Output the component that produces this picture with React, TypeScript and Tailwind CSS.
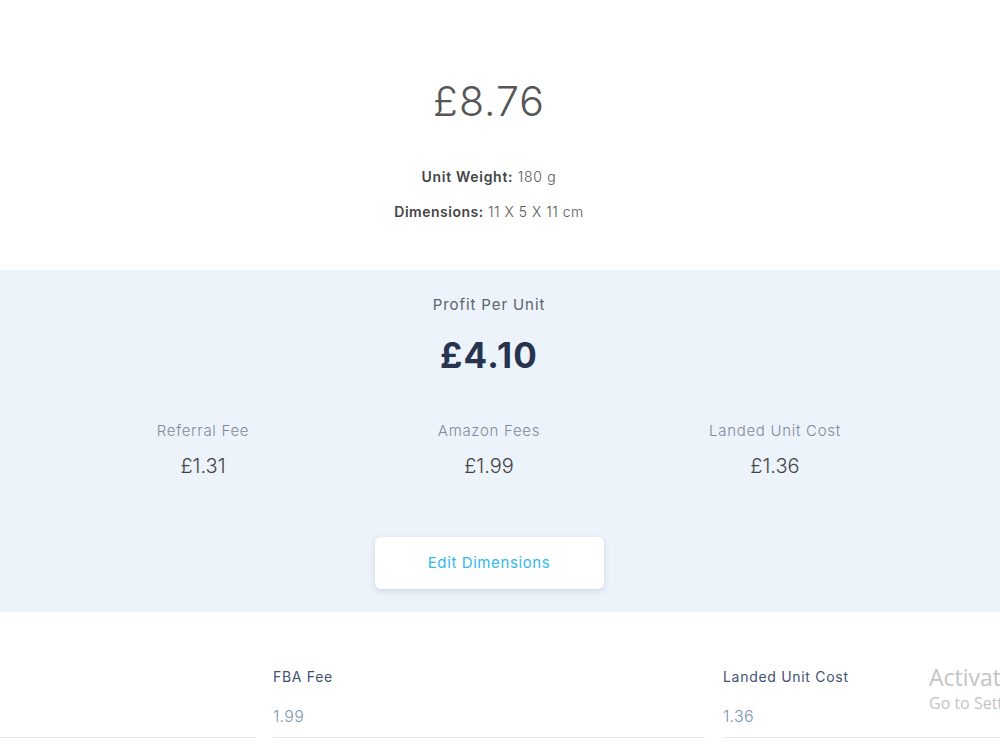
import React from 'react';

const fees = [
  { label: 'Referral Fee', value: '£1.31' },
  { label: 'Amazon Fees', value: '£1.99' },
  { label: 'Landed Unit Cost', value: '£1.36' },
];

function Field({ label, value, className }: { label?: string; value?: string; className: string }) {
  return (
    <div className={className}>
      <div className="pt-[55px] h-[75px] text-[14px] leading-[20px] font-normal tracking-[0.7px] text-[#3f5270]">{label}</div>
      <div className="mt-[17px] h-[24px] text-[16px] leading-[24px] font-light tracking-[0.3px] text-[#7b93b5]">{value}</div>
      <div className="mt-[9px] border-b border-[#e3e6ea]" />
    </div>
  );
}

export default function App() {
  return (
    <div className="relative w-[1000px] h-[750px] overflow-hidden bg-white font-['Inter','Noto_Sans',sans-serif]">
      <section className="h-[270px] w-[978px] flex flex-col items-center">
        <h1 className="pt-[80px] text-[41px] leading-[42px] font-light text-[#555] tracking-[1px]">£8.76</h1>
        <p className="mt-[45px] text-[14px] leading-[20px] tracking-[0.7px] text-[#555]">
          <span className="font-semibold text-[#444]">Unit Weight:</span> <span className="font-light">180 g</span>
        </p>
        <p className="mt-[15px] text-[14px] leading-[20px] tracking-[0.5px] text-[#555]">
          <span className="font-semibold text-[#444]">Dimensions:</span> <span className="font-light">11 X 5 X 11 cm</span>
        </p>
      </section>

      <section className="h-[342px] bg-[#edf3fb]">
        <div className="w-[978px] flex flex-col items-center">
          <p className="pt-[25px] text-[15px] leading-[20px] tracking-[0.9px] text-[#5b6470]">Profit Per Unit</p>
          <p className="mt-[23px] text-[35px] leading-[34px] font-bold tracking-[1.2px] text-[#28344f]">£4.10</p>
          <div className="mt-[49px] grid grid-cols-3 w-[858px]">
            {fees.map(f => (
              <div key={f.label} className="flex flex-col items-center">
                <span className="text-[15px] leading-[20px] font-light tracking-[0.7px] text-[#7d8b9c]">{f.label}</span>
                <span className="mt-[11px] text-[20px] leading-[28px] font-light text-[#444]">{f.value}</span>
              </div>
            ))}
          </div>
          <button className="mt-[57px] w-[229px] h-[52px] rounded-[6px] bg-white shadow-[0_2px_6px_rgba(60,90,130,0.18)] text-[15px] tracking-[0.6px] text-[#33b8f0]">
            Edit Dimensions
          </button>
        </div>
      </section>

      <section className="flex">
        <Field className="w-[256px] shrink-0" />
        <Field className="ml-[17px] w-[432px] shrink-0" label="FBA Fee" value="1.99" />
        <Field className="ml-[18px] w-[431px] shrink-0" label="Landed Unit Cost" value="1.36" />
      </section>

      <div className="absolute left-[929px] top-[662px] whitespace-nowrap font-['Open_Sans','Noto_Sans',sans-serif] text-[#c4c4c4] pointer-events-none">
        <div className="text-[23px] leading-[30px]">Activate Windows</div>
        <div className="text-[16px] leading-[22px]">Go to Settings to activate Windows.</div>
      </div>
    </div>
  );
}
